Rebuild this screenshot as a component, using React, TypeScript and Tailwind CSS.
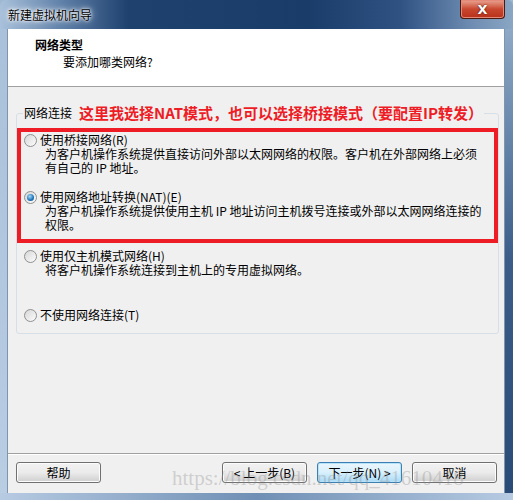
import React from 'react';

const font = "font-['Noto_Sans_CJK_SC','Microsoft_YaHei',sans-serif]";

function Radio({ checked }: { checked?: boolean }) {
  return (
    <span className="w-[13px] h-[13px] rounded-full border border-[#8e8f8f] bg-linear-to-br from-[#d6d6d6] to-[#fdfdfd] flex items-center justify-center shrink-0">
      {checked && (
        <span className="w-[7px] h-[7px] rounded-full bg-[radial-gradient(circle_at_40%_35%,#a8dcfa,#1c72b8_60%,#0b4a86)]" />
      )}
    </span>
  );
}

function Option({ label, lines, checked }: { label: string; lines?: string[]; checked?: boolean }) {
  return (
    <div className="flex flex-col">
      <div className="flex items-center gap-[3px] h-[14px]">
        <Radio checked={checked} />
        <span className="leading-[14px] text-[12px] text-black">{label}</span>
      </div>
      {lines?.map((l) => (
        <div key={l} className="ml-[21px] leading-[14px] text-[12px] text-black whitespace-nowrap">
          {l}
        </div>
      ))}
    </div>
  );
}

function Button({ children, primary }: { children: React.ReactNode; primary?: boolean }) {
  return (
    <button
      className={
        'w-[85px] h-[21px] rounded-[3px] border text-[12px] leading-[14px] text-black flex items-center justify-center ' +
        (primary
          ? 'border-[#3c7fb1] bg-linear-to-b from-[#eaf6fd] via-[#d9f0fc] to-[#a7d9f5] shadow-[inset_0_0_0_1px_#b6e3fa]'
          : 'border-[#707070] bg-linear-to-b from-[#f2f2f2] via-[#ebebeb] to-[#cfcfcf] shadow-[inset_0_0_0_1px_#fcfcfc]')
      }
    >
      {children}
    </button>
  );
}

export default function App() {
  return (
    <div className={`relative w-[513px] h-[500px] overflow-hidden ${font} bg-[#9fb8d2]`}>
      {/* title bar */}
      <div className="h-[29px] flex items-start justify-between bg-[linear-gradient(to_right,#a9c1db_0%,#5f80a8_12%,#1e416e_25%,#1a3c69_60%,#2f5283_78%,#6f8db2_92%,#8aa6c4_100%)] rounded-t-[6px]">
        <div className="pl-[8px] pt-[7px] text-[12px] leading-[16px] text-black [text-shadow:0_0_8px_#fff,0_0_4px_#fff,0_0_2px_#fff]">
          新建虚拟机向导
        </div>
        <div className="mr-[8px] w-[45px] h-[19px] rounded-b-[4px] border border-t-0 border-[#4a1a10] bg-linear-to-b from-[#e8a493] via-[#c9472f] to-[#b8301a] shadow-[inset_0_0_0_1px_#e58a78] flex items-center justify-center">
          <span className="text-white text-[13px] font-bold leading-none font-['DejaVu_Sans',sans-serif] [text-shadow:0_0_2px_#3a0f08]">
            X
          </span>
        </div>
      </div>

      <div className="flex h-[464px]">
        <div className="w-[7px] bg-linear-to-b from-[#a9c1da] to-[#b9cde3]" />
        <div className="w-[498px] flex flex-col border-x border-[#7f95ad]">
          {/* header */}
          <div className="h-[58px] bg-white border-b border-[#a0a0a0] pl-[27px] pt-[8px]">
            <div className="text-[12px] leading-[16px] font-bold text-black">网络类型</div>
            <div className="pl-[28px] pt-[1px] text-[12px] leading-[16px] text-black">要添加哪类网络?</div>
          </div>

          {/* body */}
          <div className="h-[366px] bg-[#f0f0f0] pt-[18px]">
            <fieldset className="ml-[8px] w-[480px] border border-[#d5dfe5] rounded-[3px] pb-[11px]">
              <legend className="ml-[6px] px-[1px] flex items-center leading-[16px]">
                <span className="text-[12px] text-black">网络连接</span>
                <span className="ml-[7px] text-[15px] font-bold text-[#ee1c25]">
                  这里我选择NAT模式，也可以选择桥接模式（要配置IP转发）
                </span>
              </legend>
              <div className="mt-[7px] w-[481px] border-4 border-[#ee1c25] pl-[3px] pt-[1px] pb-[7px] flex flex-col gap-[15px]">
                <Option
                  label="使用桥接网络(R)"
                  lines={[
                    '为客户机操作系统提供直接访问外部以太网网络的权限。客户机在外部网络上必须',
                    '有自己的 IP 地址。',
                  ]}
                />
                <Option
                  checked
                  label="使用网络地址转换(NAT)(E)"
                  lines={[
                    '为客户机操作系统提供使用主机 IP 地址访问主机拨号连接或外部以太网网络连接的',
                    '权限。',
                  ]}
                />
              </div>
              <div className="pl-[7px] pt-[6px] flex flex-col gap-[31px]">
                <Option label="使用仅主机模式网络(H)" lines={['将客户机操作系统连接到主机上的专用虚拟网络。']} />
                <Option label="不使用网络连接(T)" />
              </div>
            </fieldset>
          </div>

          {/* footer */}
          <div className="h-[40px] bg-[#f0f0f0] border-t border-[#a0a0a0] shadow-[inset_0_1px_0_#fff] pt-[8px] pl-[8px] pr-[7px] flex items-start">
            <Button>帮助</Button>
            <div className="ml-auto flex gap-[10px]">
              <Button>&lt; 上一步(B)</Button>
              <Button primary>下一步(N) &gt;</Button>
              <Button>取消</Button>
            </div>
          </div>
        </div>
        <div className="w-[8px] bg-linear-to-b from-[#8ea9c6] via-[#3b5d88] to-[#2a4b76]" />
      </div>
      <div className="h-[7px] bg-linear-to-r from-[#b7cbe2] via-[#6f8fb4] to-[#b7cbe2]" />

      {/* watermark */}
      <div className="absolute left-[172px] top-[466px] text-[21px] leading-[24px] font-['Liberation_Serif',serif] text-[#8c8c8c]/35 whitespace-nowrap pointer-events-none">
        https://blog.csdn.net/qq_41610418
      </div>
    </div>
  );
}
